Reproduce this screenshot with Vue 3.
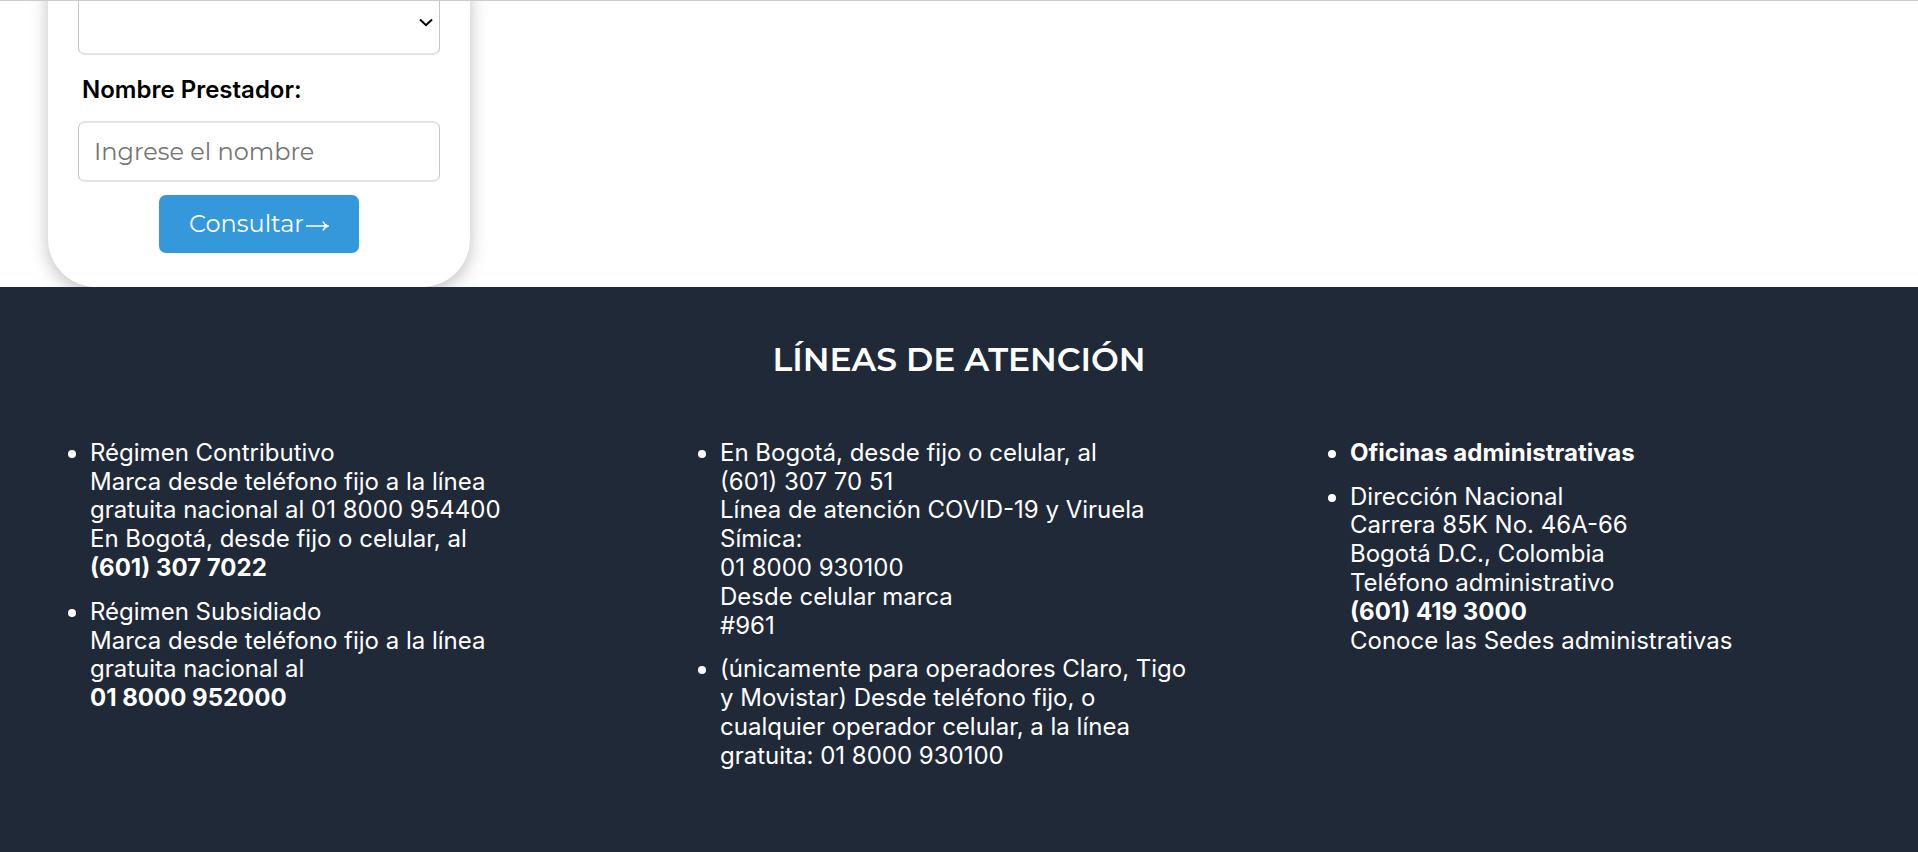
<script setup>
import { ref } from 'vue'

const tipo = ref('')
const nombre = ref('')

const columnas = [
  [
    [
      { t: 'Régimen Contributivo' },
      { t: 'Marca desde teléfono fijo a la línea gratuita nacional al 01 8000 954400' },
      { t: 'En Bogotá, desde fijo o celular, al' },
      { t: '(601) 307 7022', b: true },
    ],
    [
      { t: 'Régimen Subsidiado' },
      { t: 'Marca desde teléfono fijo a la línea gratuita nacional al' },
      { t: '01 8000 952000', b: true },
    ],
  ],
  [
    [
      { t: 'En Bogotá, desde fijo o celular, al' },
      { t: '(601) 307 70 51' },
      { t: 'Línea de atención COVID-19 y Viruela Símica:' },
      { t: '01 8000 930100' },
      { t: 'Desde celular marca' },
      { t: '#961' },
    ],
    [
      { t: '(únicamente para operadores Claro, Tigo y Movistar) Desde teléfono fijo, o cualquier operador celular, a la línea gratuita: 01 8000 930100' },
    ],
  ],
  [
    [{ t: 'Oficinas administrativas', b: true }],
    [
      { t: 'Dirección Nacional' },
      { t: 'Carrera 85K No. 46A-66' },
      { t: 'Bogotá D.C., Colombia' },
      { t: 'Teléfono administrativo' },
      { t: '(601) 419 3000', b: true },
      { t: 'Conoce las Sedes administrativas', href: '#sedes' },
    ],
  ],
]
</script>

<template>
  <div class="page">
    <main class="content">
      <form class="card" @submit.prevent>
        <div class="select-box">
          <select v-model="tipo" class="field select" aria-label="Tipo de prestador">
            <option value=""></option>
          </select>
          <svg class="chevron" viewBox="0 0 14 9" aria-hidden="true">
            <path d="M1 1.500L7 7.200L13 1.500" />
          </svg>
        </div>
        <label class="label" for="nombre">Nombre Prestador:</label>
        <input id="nombre" v-model="nombre" class="field" type="text" placeholder="Ingrese el nombre" />
        <button class="submit" type="submit">
          Consultar<svg class="arrow" viewBox="0 0 24 12" aria-hidden="true">
            <path d="M1 6H22.500M18 1.500Q19.500 5 23 6Q19.500 7 18 10.500" />
          </svg>
        </button>
      </form>
    </main>
    <footer class="footer">
      <h2 class="title">LÍNEAS DE ATENCIÓN</h2>
      <div class="columns">
        <ul v-for="(col, c) in columnas" :key="c" class="list">
          <li v-for="(item, i) in col" :key="i" class="item">
            <div v-for="(line, l) in item" :key="l">
              <strong v-if="line.b">{{ line.t }}</strong>
              <a v-else-if="line.href" class="link" :href="line.href">{{ line.t }}</a>
              <template v-else>{{ line.t }}</template>
            </div>
          </li>
        </ul>
      </div>
    </footer>
  </div>
</template>

<style>
body {
  margin: 0;
}
</style>

<style scoped>
.page {
  display: flex;
  flex-direction: column;
  min-height: 100vh;
  background: #fff;
  font-family: Inter, "Liberation Sans", sans-serif;
  font-size: 24px;
  line-height: 1.2;
}
.content {
  overflow: hidden;
  padding: 0 48px;
  border-top: 1px solid #ccc;
}
.card {
  box-sizing: border-box;
  display: flex;
  flex-direction: column;
  width: 422px;
  margin-top: -47px;
  padding: 40px 30px 34px;
  border-radius: 48px;
  background: #fff;
  box-shadow: 0 5px 18px rgba(0, 0, 0, 0.25);
}
.field {
  box-sizing: border-box;
  width: 100%;
  height: 61px;
  padding: 0 15px;
  border: solid;
  border-width: 2px 1px;
  border-color: #e3e3e3 #c6c6c6;
  border-radius: 7px;
  background: #fff;
  color: #000;
  font-family: Montserrat, Inter, sans-serif;
  font-size: 24px;
}
.select-box {
  position: relative;
  display: flex;
}
.select {
  appearance: none;
  padding: 0 32px 0 15px;
}
.chevron {
  position: absolute;
  top: 24px;
  right: 7px;
  width: 14px;
  height: 9px;
  fill: none;
  stroke: #000;
  stroke-width: 2;
  pointer-events: none;
}
.field::placeholder {
  color: #757575;
  opacity: 1;
}
.label {
  margin: 21px 4px 16px;
  color: #000;
  font-weight: 600;
}
.submit {
  display: flex;
  align-items: center;
  justify-content: center;
  align-self: center;
  width: 200px;
  height: 58px;
  margin-top: 13px;
  padding: 0;
  border: 0;
  border-radius: 7px;
  background: #3498db;
  color: #fff;
  font-family: Montserrat, Inter, sans-serif;
  font-size: 24px;
}
.arrow {
  width: 24px;
  height: 12px;
  margin: 4px 0 0 1px;
  fill: none;
  stroke: currentColor;
  stroke-width: 1.5;
}
.footer {
  flex: 1;
  padding: 50px 14px 64px;
  background: #202938;
  color: #fff;
}
.title {
  margin: 0 0 58px;
  font-family: Montserrat, Inter, sans-serif;
  font-size: 33px;
  font-weight: 600;
  line-height: 44px;
  text-align: center;
}
.columns {
  display: grid;
  grid-template-columns: repeat(3, 1fr);
}
.list {
  max-width: 472px;
  margin: 0;
  padding: 0 0 0 76px;
}
.item {
  margin-bottom: 15px;
}
.link {
  color: inherit;
  text-decoration: none;
}
</style>
